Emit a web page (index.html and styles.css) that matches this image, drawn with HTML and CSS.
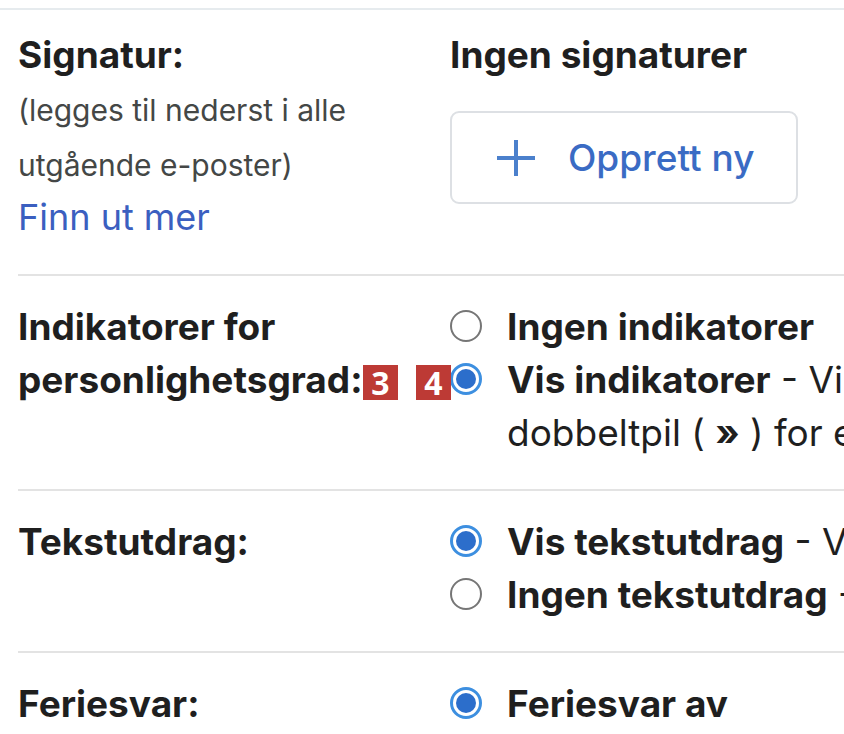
FILE: index.html
```html
<!DOCTYPE html>
<html lang="no">
  <head>
    <meta charset="UTF-8" />
    <meta name="viewport" content="width=device-width, initial-scale=1.0" />
    <title>Innstillinger</title>
    <link rel="stylesheet" href="styles.css">
  </head>
  <body>
    <div class="settings">
      <div class="row row-first">
        <div class="label">
          Signatur:
          <span class="label-note">(legges til nederst i alle utgående e-poster)</span>
          <a class="link" href="#">Finn ut mer</a>
        </div>
        <div class="value">
          <div class="strong">Ingen signaturer</div>
          <button class="create-button">
            <svg class="plus" width="40" height="40" viewBox="0 0 40 40">
              <path d="M20 2v36M1 20h38" stroke="currentColor" stroke-width="4" fill="none" />
            </svg>
            Opprett ny
          </button>
        </div>
      </div>

      <div class="row">
        <div class="label">Indikatorer for personlighetsgrad:</div>
        <div class="value">
          <div class="option">
            <span class="radio"></span>
            <div class="option-text"><b>Ingen indikatorer</b></div>
          </div>
          <div class="option">
            <span class="radio checked"></span>
            <div class="option-text">
              <b>Vis indikatorer</b> - Vis en pil ( › ) ved siden av meldinger sendt til adressen min (ikke til en e-postliste), og en<br>
              dobbeltpil ( <b>»</b> ) for e-poster som bare er sendt til meg.
            </div>
          </div>
        </div>
        <span class="badge badge-3">3</span>
        <span class="badge badge-4">4</span>
      </div>

      <div class="row">
        <div class="label">Tekstutdrag:</div>
        <div class="value">
          <div class="option">
            <span class="radio checked"></span>
            <div class="option-text"><b>Vis tekstutdrag</b> - Vis tekstutdrag av meldingen (som i Google Nettsøk!).</div>
          </div>
          <div class="option">
            <span class="radio"></span>
            <div class="option-text"><b>Ingen tekstutdrag</b> - Vis bare emnet.</div>
          </div>
        </div>
      </div>

      <div class="row row-last">
        <div class="label">Feriesvar:</div>
        <div class="value">
          <div class="option">
            <span class="radio checked"></span>
            <div class="option-text"><b>Feriesvar av</b></div>
          </div>
        </div>
      </div>
    </div>
  </body>
</html>
```

FILE: styles.css
```css
body {
  margin: 0;
  font-family: Inter, Roboto, "Liberation Sans", sans-serif;
  color: #1f1f1f;
  background-color: #fff;
  width: 844px;
  height: 734px;
  overflow: hidden;
}

.settings {
  margin-top: 8px;
  border-top: 2px solid #e6ebee;
}

.row {
  display: flex;
  position: relative;
  margin-left: 18px;
  padding: 24px 0 30px;
  border-bottom: 2px solid #e3e3e3;
  font-size: 37px;
  line-height: 53px;
}

.row-first {
  padding-top: 18px;
}

.row-last {
  border-bottom: none;
}

.label {
  width: 432px;
  flex: none;
  font-weight: 700;
}

.label-note {
  display: block;
  margin: 2px 0 -2px;
  font-size: 30px;
  line-height: 55px;
  font-weight: 400;
  color: #444746;
}

.link {
  display: block;
  font-size: 36px;
  font-weight: 400;
  color: #3b5fc0;
  text-decoration: none;
}

.value {
  flex: none;
  white-space: nowrap;
}

.strong {
  font-weight: 700;
}

.create-button {
  display: flex;
  align-items: center;
  gap: 32px;
  margin-top: 30px;
  width: 348px;
  height: 93px;
  padding: 0 0 0 44px;
  box-sizing: border-box;
  border: 2px solid #dde0e4;
  border-radius: 9px;
  background-color: #fff;
  color: #3a6bc4;
  font-family: inherit;
  font-size: 37px;
  font-weight: 500;
}

.plus {
  color: #4b80cc;
  flex: none;
}

.option {
  display: flex;
  align-items: flex-start;
  gap: 25px;
}

.radio {
  flex: none;
  width: 32px;
  height: 32px;
  margin-top: 10px;
  box-sizing: border-box;
  border: 2.5px solid #767676;
  border-radius: 50%;
}

.radio.checked {
  border: 3px solid #3d8fe0;
  padding: 3px;
  background-color: #2c6ecb;
  background-clip: content-box;
}

.option-text b {
  font-weight: 700;
}

.badge {
  position: absolute;
  top: 89px;
  width: 35px;
  height: 35px;
  display: flex;
  justify-content: center;
  align-items: center;
  background-color: #bd3a35;
  color: #fff;
  font-family: "Open Sans", sans-serif;
  font-size: 32px;
  font-weight: 700;
  line-height: 1;
}

.badge-3 {
  left: 345px;
}

.badge-4 {
  left: 398px;
}
```
